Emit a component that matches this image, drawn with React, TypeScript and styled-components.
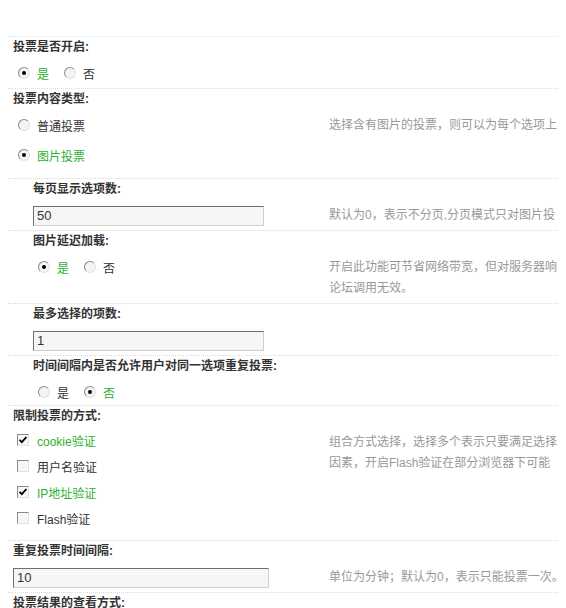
import styled, { createGlobalStyle } from "styled-components";

const Global = createGlobalStyle`
html, body { overflow: hidden; }
body {
  margin: 8px;
  background: #fff;
  font-family: "Liberation Sans", "Noto Sans CJK SC", sans-serif;
  font-size: 12px;
  color: #333;
}
`;

const Table = styled.div`
width: 900px;
`;

const Spacer = styled.div`
height: 28px;
`;

const Section = styled.div<{ $first?: boolean }>`
border-top: 1px dotted ${p => (p.$first ? "#d6e9f7" : "#dcdcdc")};
`;

const Label = styled.div<{ $sub?: boolean }>`
height: 21px;
line-height: 21px;
padding-left: ${p => (p.$sub ? 25 : 5)}px;
font-weight: bold;
color: #333;
white-space: nowrap;
`;

const ValueRow = styled.div<{ $h: number }>`
display: grid;
grid-template-columns: 316px 1fr;
min-height: ${p => p.$h}px;
`;

const LeftCell = styled.div<{ $sub?: boolean }>`
padding: 5px 5px 0 ${p => (p.$sub ? 25 : 5)}px;
`;

const Tips = styled.div`
padding: 5px 5px 0;
line-height: 21px;
color: #999;
white-space: pre;
`;

const List = styled.div<{ $gap: number; $dir?: "row" | "column" }>`
display: flex;
flex-direction: ${p => p.$dir ?? "column"};
gap: ${p => p.$gap}px;
`;

const Item = styled.label<{ $on?: boolean }>`
display: flex;
align-items: center;
height: 20px;
color: ${p => (p.$on ? "#2fb02f" : "#333")};
white-space: nowrap;
`;

const Radio = styled.span<{ $on?: boolean }>`
position: relative;
width: 12px;
height: 12px;
margin: 0 7px 0 5px;
border-radius: 50%;
border: 1px solid;
border-color: #8a8a8a #e2e2e2 #e2e2e2 #8a8a8a;
box-sizing: border-box;
background: #f4f4f4;
&::after {
  content: "";
  display: ${p => (p.$on ? "block" : "none")};
  position: absolute;
  left: 3px;
  top: 3px;
  width: 4px;
  height: 4px;
  border-radius: 50%;
  background: #000;
}
`;

const Check = styled.span`
display: flex;
align-items: center;
justify-content: center;
width: 12px;
height: 12px;
margin: 0 8px 0 4px;
border: 1px solid;
border-color: #8a8a8a #e2e2e2 #e2e2e2 #8a8a8a;
box-sizing: border-box;
background: #f6f6f6;
`;

const Input = styled.div<{ $w: number }>`
width: ${p => p.$w}px;
height: 20px;
margin-top: 1px;
box-sizing: border-box;
padding: 0 3px;
line-height: 18px;
font-size: 13px;
border: 1px solid;
border-color: #6f6f6f #cfcfcf #cfcfcf #6f6f6f;
background: #f6f6f6;
color: #333;
`;

type Opt = { text: string; on?: boolean };

function RadioGroup({ opts, dir, gap }: { opts: Opt[]; dir?: "row" | "column"; gap: number }) {
  return (
    <List $dir={dir} $gap={gap}>
      {opts.map(o => (
        <Item key={o.text} $on={o.on}>
          <Radio $on={o.on} />
          {o.text}
        </Item>
      ))}
    </List>
  );
}

function CheckGroup({ opts }: { opts: Opt[] }) {
  return (
    <List $gap={6} style={{ marginTop: -2 }}>
      {opts.map(o => (
        <Item key={o.text} $on={o.on}>
          <Check>
            {o.on && (
              <svg width="8" height="8" viewBox="0 0 8 8">
                <path d="M0.5 3.8 L2.8 6.2 L7.4 1" stroke="#000" strokeWidth="1.8" fill="none" />
              </svg>
            )}
          </Check>
          {o.text}
        </Item>
      ))}
    </List>
  );
}

const yesNo = (yes: boolean): Opt[] => [
  { text: "是", on: yes },
  { text: "否", on: !yes },
];

export default function App() {
  return (
    <>
      <Global />
      <Table>
        <Spacer />
        <Section $first>
          <Label>投票是否开启:</Label>
          <ValueRow $h={30}>
            <LeftCell>
              <RadioGroup opts={yesNo(true)} dir="row" gap={10} />
            </LeftCell>
            <Tips />
          </ValueRow>
        </Section>

        <Section>
          <Label>投票内容类型:</Label>
          <ValueRow $h={68}>
            <LeftCell>
              <RadioGroup
                opts={[{ text: "普通投票" }, { text: "图片投票", on: true }]}
                gap={10}
              />
            </LeftCell>
            <Tips>选择含有图片的投票，则可以为每个选项上</Tips>
          </ValueRow>
        </Section>

        <Section>
          <Label $sub>每页显示选项数:</Label>
          <ValueRow $h={30}>
            <LeftCell $sub>
              <Input $w={231}>50</Input>
            </LeftCell>
            <Tips>默认为0，表示不分页,分页模式只对图片投</Tips>
          </ValueRow>
        </Section>

        <Section>
          <Label $sub>图片延迟加载:</Label>
          <ValueRow $h={51}>
            <LeftCell $sub>
              <RadioGroup opts={yesNo(true)} dir="row" gap={10} />
            </LeftCell>
            <Tips>{"开启此功能可节省网络带宽，但对服务器响\n论坛调用无效。"}</Tips>
          </ValueRow>
        </Section>

        <Section>
          <Label $sub>最多选择的项数:</Label>
          <ValueRow $h={30}>
            <LeftCell $sub>
              <Input $w={231}>1</Input>
            </LeftCell>
            <Tips />
          </ValueRow>
        </Section>

        <Section>
          <Label $sub>时间间隔内是否允许用户对同一选项重复投票:</Label>
          <ValueRow $h={28}>
            <LeftCell $sub>
              <RadioGroup opts={yesNo(false)} dir="row" gap={10} />
            </LeftCell>
            <Tips />
          </ValueRow>
        </Section>

        <Section>
          <Label>限制投票的方式:</Label>
          <ValueRow $h={113}>
            <LeftCell>
              <CheckGroup
                opts={[
                  { text: "cookie验证", on: true },
                  { text: "用户名验证" },
                  { text: "IP地址验证", on: true },
                  { text: "Flash验证" },
                ]}
              />
            </LeftCell>
            <Tips>{"组合方式选择，选择多个表示只要满足选择\n因素，开启Flash验证在部分浏览器下可能"}</Tips>
          </ValueRow>
        </Section>

        <Section>
          <Label>重复投票时间间隔:</Label>
          <ValueRow $h={30}>
            <LeftCell>
              <Input $w={256}>10</Input>
            </LeftCell>
            <Tips>单位为分钟；默认为0，表示只能投票一次。</Tips>
          </ValueRow>
        </Section>

        <Section>
          <Label>投票结果的查看方式:</Label>
        </Section>
      </Table>
    </>
  );
}
